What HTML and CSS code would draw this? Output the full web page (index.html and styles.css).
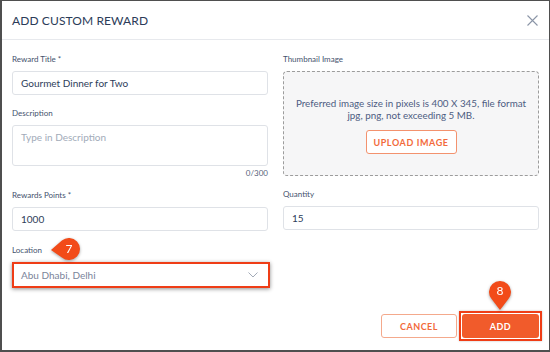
FILE: index.html
```html
<!DOCTYPE html>
<html lang="en">
<head>
<meta charset="UTF-8" />
<meta name="viewport" content="width=device-width, initial-scale=1.0"/>
<title>Add Custom Reward</title>
<link rel="stylesheet" href="styles.css">
</head>
<body>

<div class="modal">
<header class="modal-head">
<h2>ADD CUSTOM REWARD</h2>
<button class="close" aria-label="close">
<svg width="11" height="11" viewBox="0 0 11 11"><path d="M0.5 0.5L10.5 10.5M10.5 0.5L0.5 10.5" stroke="#8b95a7" stroke-width="1.1" fill="none"/></svg>
</button>
</header>

<div class="modal-body">
<div class="col">
<div class="field">
<label>Reward Title *</label>
<div class="input">Gourmet Dinner for Two</div>
</div>

<div class="field">
<label>Description</label>
<div class="input textarea placeholder">Type in Description</div>
<div class="counter">0/300</div>
</div>

<div class="field field-points">
<label>Rewards Points *</label>
<div class="input">1000</div>
</div>

<div class="field field-location">
<label>Location</label>
<div class="input select marked">
<span>Abu Dhabi, Delhi</span>
<svg width="10" height="6" viewBox="0 0 10 6"><path d="M0.5 0.5L5 5L9.5 0.5" stroke="#a3abb8" stroke-width="1" fill="none"/></svg>
</div>
<div class="badge badge-left">
<svg width="34" height="26" viewBox="-20 -13 34 26"><path d="M-18 1L-7.1 -8.4A11 11 0 1 1 -7.1 8.4Z" fill="#f24b19"/></svg>
<span>7</span>
</div>
</div>
</div>

<div class="col">
<div class="field">
<label>Thumbnail Image</label>
<div class="dropzone">
<p>Preferred image size in pixels is 400 X 345, file format<br>jpg, png, not exceeding 5 MB.</p>
<button class="upload-btn">UPLOAD IMAGE</button>
</div>
</div>

<div class="field field-qty">
<label>Quantity</label>
<div class="input">15</div>
</div>
</div>
</div>

<footer class="modal-foot">
<button class="btn btn-cancel">CANCEL</button>
<div class="add-wrap">
<button class="btn btn-add">ADD</button>
<div class="badge badge-down">
<svg width="26" height="32" viewBox="-13 -13 26 32"><path d="M0 18L-8.4 7.1A11 11 0 1 1 8.4 7.1Z" fill="#f24b19"/></svg>
<span>8</span>
</div>
</div>
</footer>
</div>

</body>
</html>
```

FILE: styles.css
```css
* {
box-sizing: border-box;
}

html, body {
margin: 0;
height: 100%;
}

body {
font-family: 'Lato', 'Liberation Sans', sans-serif;
background: #fff;
}

.modal {
height: 352px;
border-style: solid;
border-color: #4f4f4f;
border-width: 1px 1px 2px 2px;
display: flex;
flex-direction: column;
background: #fff;
}

.modal-head {
height: 39px;
border-bottom: 1px solid #e7e9ed;
display: flex;
align-items: center;
justify-content: space-between;
padding: 0 11px 0 10px;
}

.modal-head h2 {
margin: 0;
font-size: 12px;
font-weight: 400;
color: #2b3b58;
letter-spacing: 0.1px;
}

.close {
background: none;
border: none;
padding: 0;
width: 11px;
height: 11px;
display: flex;
}

.modal-body {
display: grid;
grid-template-columns: 256px 256px;
column-gap: 15px;
padding: 13px 10px 0;
}

.field {
margin-bottom: 12px;
position: relative;
}

.field label {
display: block;
font-size: 8px;
line-height: 12px;
color: #44526d;
margin-bottom: 6px;
}

.input {
height: 24px;
border: 1px solid #dfe2e7;
border-radius: 3px;
padding: 0 8px;
font-size: 10px;
line-height: 22px;
color: #2e3d5a;
}

.textarea {
height: 41px;
line-height: 12px;
padding-top: 5px;
}

.placeholder {
color: #a2abb9;
}

.counter {
text-align: right;
font-size: 8px;
line-height: 12px;
color: #56627a;
margin-top: 1px;
margin-bottom: -2px;
}

.field-points {
margin-bottom: 13px;
}

.select {
display: flex;
align-items: center;
justify-content: space-between;
color: #7a849a;
padding-right: 10px;
}

.marked {
border: 2px solid #ef3d16;
border-radius: 0;
box-shadow: 0 1px 4px rgba(0, 0, 0, 0.45);
padding-left: 7px;
width: 258px;
height: 26px;
}

.dropzone {
height: 105px;
border: 1.6px dashed #9c9c9c;
border-radius: 4px;
background: #f6f6f7;
display: flex;
flex-direction: column;
align-items: center;
justify-content: center;
padding-top: 4px;
}

.dropzone p {
margin: 0 0 9px;
text-align: center;
font-size: 9.8px;
line-height: 12px;
color: #4d5c82;
}

.upload-btn {
font-family: inherit;
background: #fff;
border: 1px solid #f3926e;
border-radius: 3px;
color: #f26a3b;
font-size: 9px;
font-weight: 700;
letter-spacing: 0.6px;
width: 91px;
height: 24px;
padding: 0;
}

.field-qty {
margin-top: 2px;
}

.modal-foot {
margin-top: auto;
display: flex;
justify-content: flex-end;
align-items: center;
gap: 5px;
padding: 0 10px 12px;
}

.btn {
font-family: inherit;
height: 24px;
border-radius: 3px;
font-size: 9px;
font-weight: 700;
letter-spacing: 0.5px;
padding: 0;
display: block;
}

.btn-cancel {
width: 76px;
background: #fff;
border: 1px solid #f4a98c;
color: #f26a3b;
}

.add-wrap {
position: relative;
border: 2px solid #ef3d16;
padding: 1px;
margin: -3px -3px -3px -3px;
box-shadow: 0 0 2px rgba(0, 0, 0, 0.25);
}

.btn-add {
width: 77px;
background: #f15b2b;
border: none;
color: #fff;
}

.badge {
position: absolute;
filter: drop-shadow(0 1px 1.5px rgba(0, 0, 0, 0.35));
}

.badge svg {
display: block;
}

.badge span {
position: absolute;
color: #fff;
font-size: 12px;
line-height: 14px;
text-align: center;
width: 22px;
}

.badge-left {
left: 37px;
top: -8px;
}

.badge-left span {
left: 9px;
top: 6px;
}

.badge-down {
left: 26px;
top: -34px;
}

.badge-down span {
left: 2px;
top: 5px;
}
```
